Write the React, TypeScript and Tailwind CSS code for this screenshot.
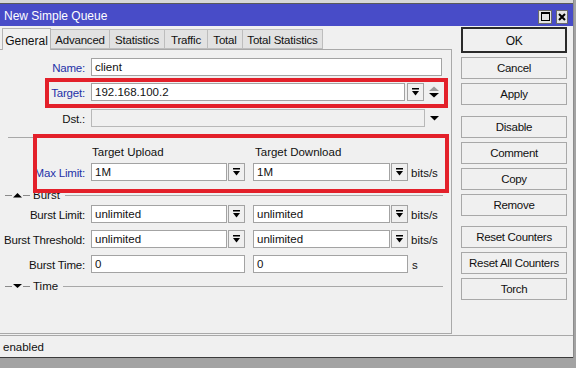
import React from "react";

const FONT = { fontFamily: '"Liberation Sans", Arial, sans-serif' };

function DropIcon() {
  return (
    <svg width="7" height="8" viewBox="0 0 7 8">
      <rect x="0" y="0" width="7" height="1.5" fill="#000" />
      <path d="M0 3h7L3.5 7.5z" fill="#000" />
    </svg>
  );
}

function DropBtn() {
  return (
    <div className="w-[17px] h-[18px] border border-[#a3a3a3] bg-[#f0f0f0] flex items-center justify-center">
      <DropIcon />
    </div>
  );
}

function Field({ value, className = "" }: { value: string; className?: string }) {
  return (
    <div className={"h-[18px] border border-[#a3a3a3] bg-white pl-[3px] pt-[2px] flex items-center text-[11.5px] text-[#111] leading-none " + className}>
      {value}
    </div>
  );
}

function Label({ text, blue }: { text: string; blue?: boolean }) {
  return (
    <div className={"w-[85px] pt-[3px] text-right whitespace-nowrap text-[11.5px] tracking-[-0.2px] leading-none " + (blue ? "text-[#2430a8]" : "text-[#111]")}>
      {text}
    </div>
  );
}

// two columns of value + dropdown, then a unit
function PairRow({ label, a, b, unit, blue, mt }: { label: string; a: string; b: string; unit: string; blue?: boolean; mt: string }) {
  return (
    <div className={"flex items-center h-[18px] " + mt}>
      <Label text={label} blue={blue} />
      <div className="ml-[6px] flex gap-px">
        <Field value={a} className="w-[136px]" />
        <DropBtn />
      </div>
      <div className="ml-[8px] flex gap-px">
        <Field value={b} className="w-[137px]" />
        <DropBtn />
      </div>
      <span className="ml-[3px] pt-[3px] text-[11.5px] leading-none">{unit}</span>
    </div>
  );
}

function Section({ title, open, mt }: { title: string; open?: boolean; mt: string }) {
  return (
    <div className={"flex items-center h-[12px] mr-[8px] " + mt}>
      <svg width="31" height="8" viewBox="0 0 31 8" className="shrink-0">
        <rect x="5" y="4" width="7" height="1" fill="#8a8a8a" />
        {open ? (
          <path d="M13 2h9l-4.5 4z" fill="#000" />
        ) : (
          <path d="M13 6.5h9l-4.5-4.5z" fill="#000" />
        )}
        <rect x="23" y="4" width="7" height="1" fill="#8a8a8a" />
      </svg>
      <span className="ml-[2px] pt-[2px] text-[11.5px] leading-none">{title}</span>
      <div className="ml-[5px] flex-1 h-px bg-[#a8a8a8]" />
    </div>
  );
}

const tabs = [
  { name: "General", w: "w-[49px]" },
  { name: "Advanced", w: "w-[59px]" },
  { name: "Statistics", w: "w-[55px]" },
  { name: "Traffic", w: "w-[43px]" },
  { name: "Total", w: "w-[35px]" },
  { name: "Total Statistics", w: "w-[80px]" },
];

const buttons: { label: string; mt: string; ok?: boolean }[] = [
  { label: "OK", mt: "mt-[1px]", ok: true },
  { label: "Cancel", mt: "mt-[4px]" },
  { label: "Apply", mt: "mt-[4px]" },
  { label: "Disable", mt: "mt-[11px]" },
  { label: "Comment", mt: "mt-[4px]" },
  { label: "Copy", mt: "mt-[4px]" },
  { label: "Remove", mt: "mt-[4px]" },
  { label: "Reset Counters", mt: "mt-[10px]" },
  { label: "Reset All Counters", mt: "mt-[4px]" },
  { label: "Torch", mt: "mt-[4px]" },
];

export default function App() {
  return (
    <div className="relative w-[576px] h-[368px] overflow-hidden bg-[#a3a3a3] text-[#111]" style={FONT}>
      <div className="w-[574px] flex flex-col bg-[#f0f0f0] border-r border-[#8c8c8c]">
        {/* strip of whatever is behind */}
        <div className="h-[3px] bg-[#d8d8d8]" />
        <div className="h-px bg-[#5a5a5a]" />

        {/* title bar */}
        <div className="h-[22px] bg-[#484cc8] flex items-center pl-[4px] pr-[5px]">
          <span className="text-white text-[12px] pt-[2px] leading-none">New Simple Queue</span>
          <div className="ml-auto flex gap-[4px] pt-[3px]">
            <div className="w-[14px] h-[14px] bg-[#e4e4e4] border border-[#6a6a6a] flex items-center justify-center">
              <div className="w-[9px] h-[9px] border border-black border-t-2" />
            </div>
            <div className="w-[12px] h-[14px] bg-[#e4e4e4] border border-[#6a6a6a] flex items-center justify-center">
              <svg width="8" height="8" viewBox="0 0 8 8">
                <path d="M1 1l6 6M7 1L1 7" stroke="#000" strokeWidth="2" />
              </svg>
            </div>
          </div>
        </div>

        {/* body */}
        <div className="flex h-[308px]">
          <div className="w-[452px] flex flex-col">
            <div className="mt-[2px] h-[21px] flex items-end pl-[2px]">
              {tabs.map((t, i) =>
                i === 0 ? (
                  <div
                    key={t.name}
                    className={t.w + " h-[22px] -mb-px z-10 pt-[3px] bg-[#f0f0f0] border border-b-0 border-[#b4b4b4] flex items-center justify-center text-[12px] leading-none whitespace-nowrap"}
                  >
                    {t.name}
                  </div>
                ) : (
                  <div
                    key={t.name}
                    className={t.w + " h-[20px] pt-[3px] bg-[#e2e2e2] border border-l-0 border-[#bdbdbd] flex items-center justify-center text-[11.5px] tracking-[-0.2px] leading-none whitespace-nowrap"}
                  >
                    {t.name}
                  </div>
                )
              )}
            </div>

            <div className="h-[285px] border-t border-r border-b border-[#a9a9a9] flex flex-col">
              <div className="flex items-center h-[18px] mt-[8px]">
                <Label text="Name:" blue />
                <Field value="client" className="ml-[6px] w-[351px]" />
              </div>

              <div className="flex items-center h-[18px] mt-[7px]">
                <Label text="Target:" blue />
                <Field value="192.168.100.2" className="ml-[6px] w-[314px]" />
                <div className="ml-[2px]">
                  <DropBtn />
                </div>
                <svg width="12" height="12" viewBox="0 0 12 12" className="ml-[4px]">
                  <path d="M1 5L6 0.5 11 5z" fill="#9a9a9a" />
                  <path d="M1 7h10L6 11.5z" fill="#000" />
                </svg>
              </div>

              <div className="flex items-center h-[18px] mt-[8px]">
                <Label text="Dst.:" />
                <div className="ml-[6px] w-[334px] h-[18px] border border-[#b8b8b8] bg-[#f0f0f0]" />
                <svg width="9" height="5" viewBox="0 0 9 5" className="ml-[5px]">
                  <path d="M0 0h9L4.5 4.5z" fill="#000" />
                </svg>
              </div>

              <div className="mt-[10px] ml-[8px] mr-[8px] h-px bg-[#a8a8a8]" />

              <div className="mt-[7px] h-[14px] pt-[2px] flex items-center text-[11.5px] leading-none">
                <span className="ml-[92px] w-[162px]">Target Upload</span>
                <span className="ml-[1px]">Target Download</span>
              </div>

              <PairRow label="Max Limit:" a="1M" b="1M" unit="bits/s" blue mt="mt-[4px]" />

              <Section title="Burst" mt="mt-[8px]" />

              <PairRow label="Burst Limit:" a="unlimited" b="unlimited" unit="bits/s" mt="mt-[4px]" />
              <PairRow label="Burst Threshold:" a="unlimited" b="unlimited" unit="bits/s" mt="mt-[7px]" />

              <div className="flex items-center h-[18px] mt-[7px]">
                <Label text="Burst Time:" />
                <Field value="0" className="ml-[6px] w-[154px]" />
                <Field value="0" className="ml-[8px] w-[155px]" />
                <span className="ml-[4px] pt-[3px] text-[11.5px] leading-none">s</span>
              </div>

              <Section title="Time" open mt="mt-[7px]" />
            </div>
          </div>

          <div className="ml-[9px] w-[106px] flex flex-col">
            {buttons.map((b) => (
              <div
                key={b.label}
                className={
                  b.mt +
                  " pt-[2px] flex items-center justify-center text-[11.5px] tracking-[-0.3px] leading-none whitespace-nowrap " +
                  (b.ok
                    ? "h-[26px] border-2 border-[#2a2a2a] bg-[#f0f0f0] text-[12px]"
                    : "h-[22px] border border-[#a8a8a8] bg-[#f0f0f0]")
                }
              >
                {b.label}
              </div>
            ))}
          </div>
        </div>

        {/* status bar */}
        <div className="mt-px h-[23px] pt-[2px] border-t border-[#a8a8a8] border-b border-b-[#3c3c3c] flex items-center pl-[3px] text-[11.5px] leading-none">
          enabled
        </div>
      </div>

      {/* red annotation boxes drawn over the form */}
      <div className="pointer-events-none absolute left-[45px] top-[78px] w-[403px] h-[30px] border-4 border-[#e3202a]" />
      <div className="pointer-events-none absolute left-[33px] top-[134px] w-[416px] h-[59px] border-4 border-[#e3202a]" />
    </div>
  );
}
